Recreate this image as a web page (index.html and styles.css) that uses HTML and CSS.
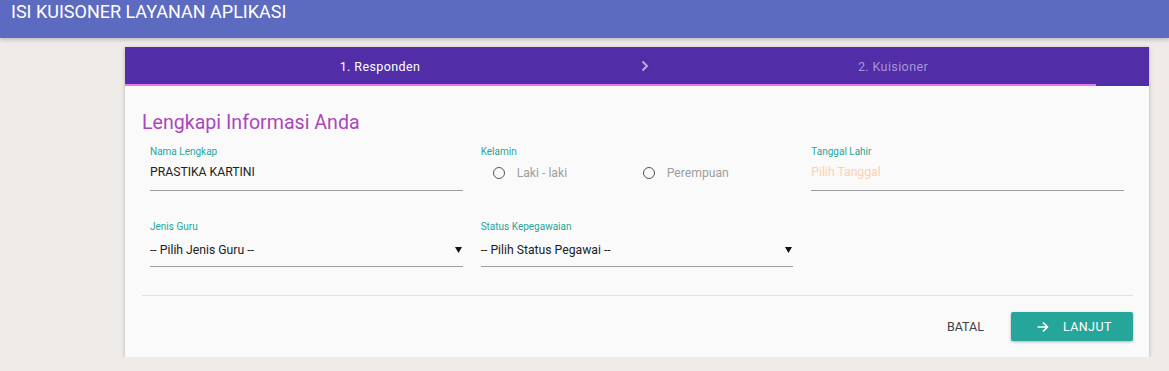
FILE: index.html
```html
<!DOCTYPE html>
<html lang="id">
<head>
  <meta charset="UTF-8">
  <title>Isi Kuisoner Layanan Aplikasi</title>
  <link rel="stylesheet" href="styles.css">
</head>
<body>
  <header class="topbar">ISI KUISONER LAYANAN APLIKASI</header>

  <div class="card">
    <div class="steps">
      <div class="step-row">
        <div class="step step-one">1. Responden</div>
        <div class="step-chevron">
          <svg width="8" height="12" viewBox="0 0 8 12"><path d="M1.5 1.5 L6 6 L1.5 10.5" fill="none" stroke="currentColor" stroke-width="2"/></svg>
        </div>
        <div class="step step-two">2. Kuisioner</div>
      </div>
      <div class="step-ink"></div>
    </div>

    <div class="card-body">
      <h2 class="title">Lengkapi Informasi Anda</h2>

      <div class="fields">
        <div class="field">
          <label class="field-label">Nama Lengkap</label>
          <div class="field-input">PRASTIKA KARTINI</div>
        </div>
        <div class="field">
          <label class="field-label">Kelamin</label>
          <div class="radios">
            <div class="radio"><span class="radio-dot"></span>Laki - laki</div>
            <div class="radio"><span class="radio-dot"></span>Perempuan</div>
          </div>
        </div>
        <div class="field">
          <label class="field-label">Tanggal Lahir</label>
          <div class="field-input placeholder">Pilih Tanggal</div>
        </div>
        <div class="field">
          <label class="field-label">Jenis Guru</label>
          <div class="field-input select">
            <span>-- Pilih Jenis Guru --</span>
            <svg width="7" height="6" viewBox="0 0 7 6"><path d="M0 0 H7 L3.5 6 Z" fill="#111"/></svg>
          </div>
        </div>
        <div class="field">
          <label class="field-label">Status Kepegawaian</label>
          <div class="field-input select">
            <span>-- Pilih Status Pegawai --</span>
            <svg width="7" height="6" viewBox="0 0 7 6"><path d="M0 0 H7 L3.5 6 Z" fill="#111"/></svg>
          </div>
        </div>
      </div>

      <div class="divider"></div>

      <div class="actions">
        <button class="btn-flat">BATAL</button>
        <button class="btn-raised">
          <svg width="12" height="12" viewBox="0 0 12 12"><path d="M0.5 6 H10.5 M6 1.5 L10.5 6 L6 10.5" fill="none" stroke="#fff" stroke-width="1.6"/></svg>
          LANJUT
        </button>
      </div>
    </div>
  </div>
</body>
</html>
```

FILE: styles.css
```css
body {
  margin: 0;
  background: #efebe9;
  font-family: Roboto, "Noto Sans", sans-serif;
  color: #212121;
}
.topbar {
  height: 38px;
  padding: 0 11px;
  background: #5c6bc0;
  color: #fff;
  font-size: 18px;
  line-height: 24px;
  box-shadow: 0 2px 4px rgba(0, 0, 0, 0.2);
}
.card {
  width: 1024px;
  margin: 9px 0 0 125px;
  background: #fafafa;
  box-shadow: 0 1px 4px rgba(0, 0, 0, 0.25);
}
.steps {
  background: #512da8;
}
.step-row {
  display: flex;
  height: 37px;
  padding-top: 1px;
  box-sizing: border-box;
  align-items: center;
  font-size: 12.5px;
  letter-spacing: 0.4px;
}
.step {
  text-align: center;
}
.step-one {
  width: 510px;
  color: #fff;
}
.step-two {
  width: 476px;
  color: rgba(255, 255, 255, 0.5);
}
.step-chevron {
  width: 20px;
  display: flex;
  justify-content: center;
  color: rgba(255, 255, 255, 0.6);
}
.step-ink {
  width: 971px;
  height: 2px;
  background: #e27af0;
}
.card-body {
  padding: 25px 16px 16px 17px;
}
.title {
  margin: 0;
  font-size: 19.6px;
  font-weight: normal;
  line-height: 24px;
  color: #ab47bc;
}
.fields {
  display: grid;
  grid-template-columns: repeat(3, 1fr);
  column-gap: 18px;
  row-gap: 30px;
  margin: 11px 9px 0 8px;
}
.field-label {
  display: block;
  font-size: 10px;
  line-height: 12px;
  color: #26a69a;
}
.field-input {
  padding: 4px 0 8px;
  font-size: 12.2px;
  line-height: 20px;
  border-bottom: 1px solid #9e9e9e;
}
.placeholder {
  color: #ffd0b0;
}
.select {
  display: flex;
  justify-content: space-between;
  align-items: center;
  padding-top: 7px;
  padding-bottom: 6px;
  padding-right: 1px;
}
.radios {
  display: flex;
  padding-top: 5px;
  font-size: 12.2px;
  line-height: 20px;
  color: #9e9e9e;
}
.radio {
  width: 150px;
  display: flex;
  align-items: center;
  padding-left: 12px;
  box-sizing: border-box;
}
.radio-dot {
  width: 10px;
  height: 10px;
  border: 1.5px solid #555;
  border-radius: 50%;
  margin-right: 12px;
}
.divider {
  height: 1px;
  margin-top: 28px;
  background: #e0e0e0;
}
.actions {
  display: flex;
  justify-content: flex-end;
  align-items: center;
  padding-top: 16px;
}
.btn-flat {
  border: none;
  background: none;
  font-family: inherit;
  font-size: 12.5px;
  color: #424242;
  padding: 0 27px 0 0;
}
.btn-raised {
  display: flex;
  align-items: center;
  height: 29px;
  width: 122px;
  padding: 0 0 0 26px;
  border: none;
  border-radius: 2px;
  background: #26a69a;
  color: #fff;
  font-family: inherit;
  font-size: 12.5px;
  letter-spacing: 0.4px;
  box-shadow: 0 1px 3px rgba(0, 0, 0, 0.3);
}
.btn-raised svg {
  margin-right: 14px;
}
```
